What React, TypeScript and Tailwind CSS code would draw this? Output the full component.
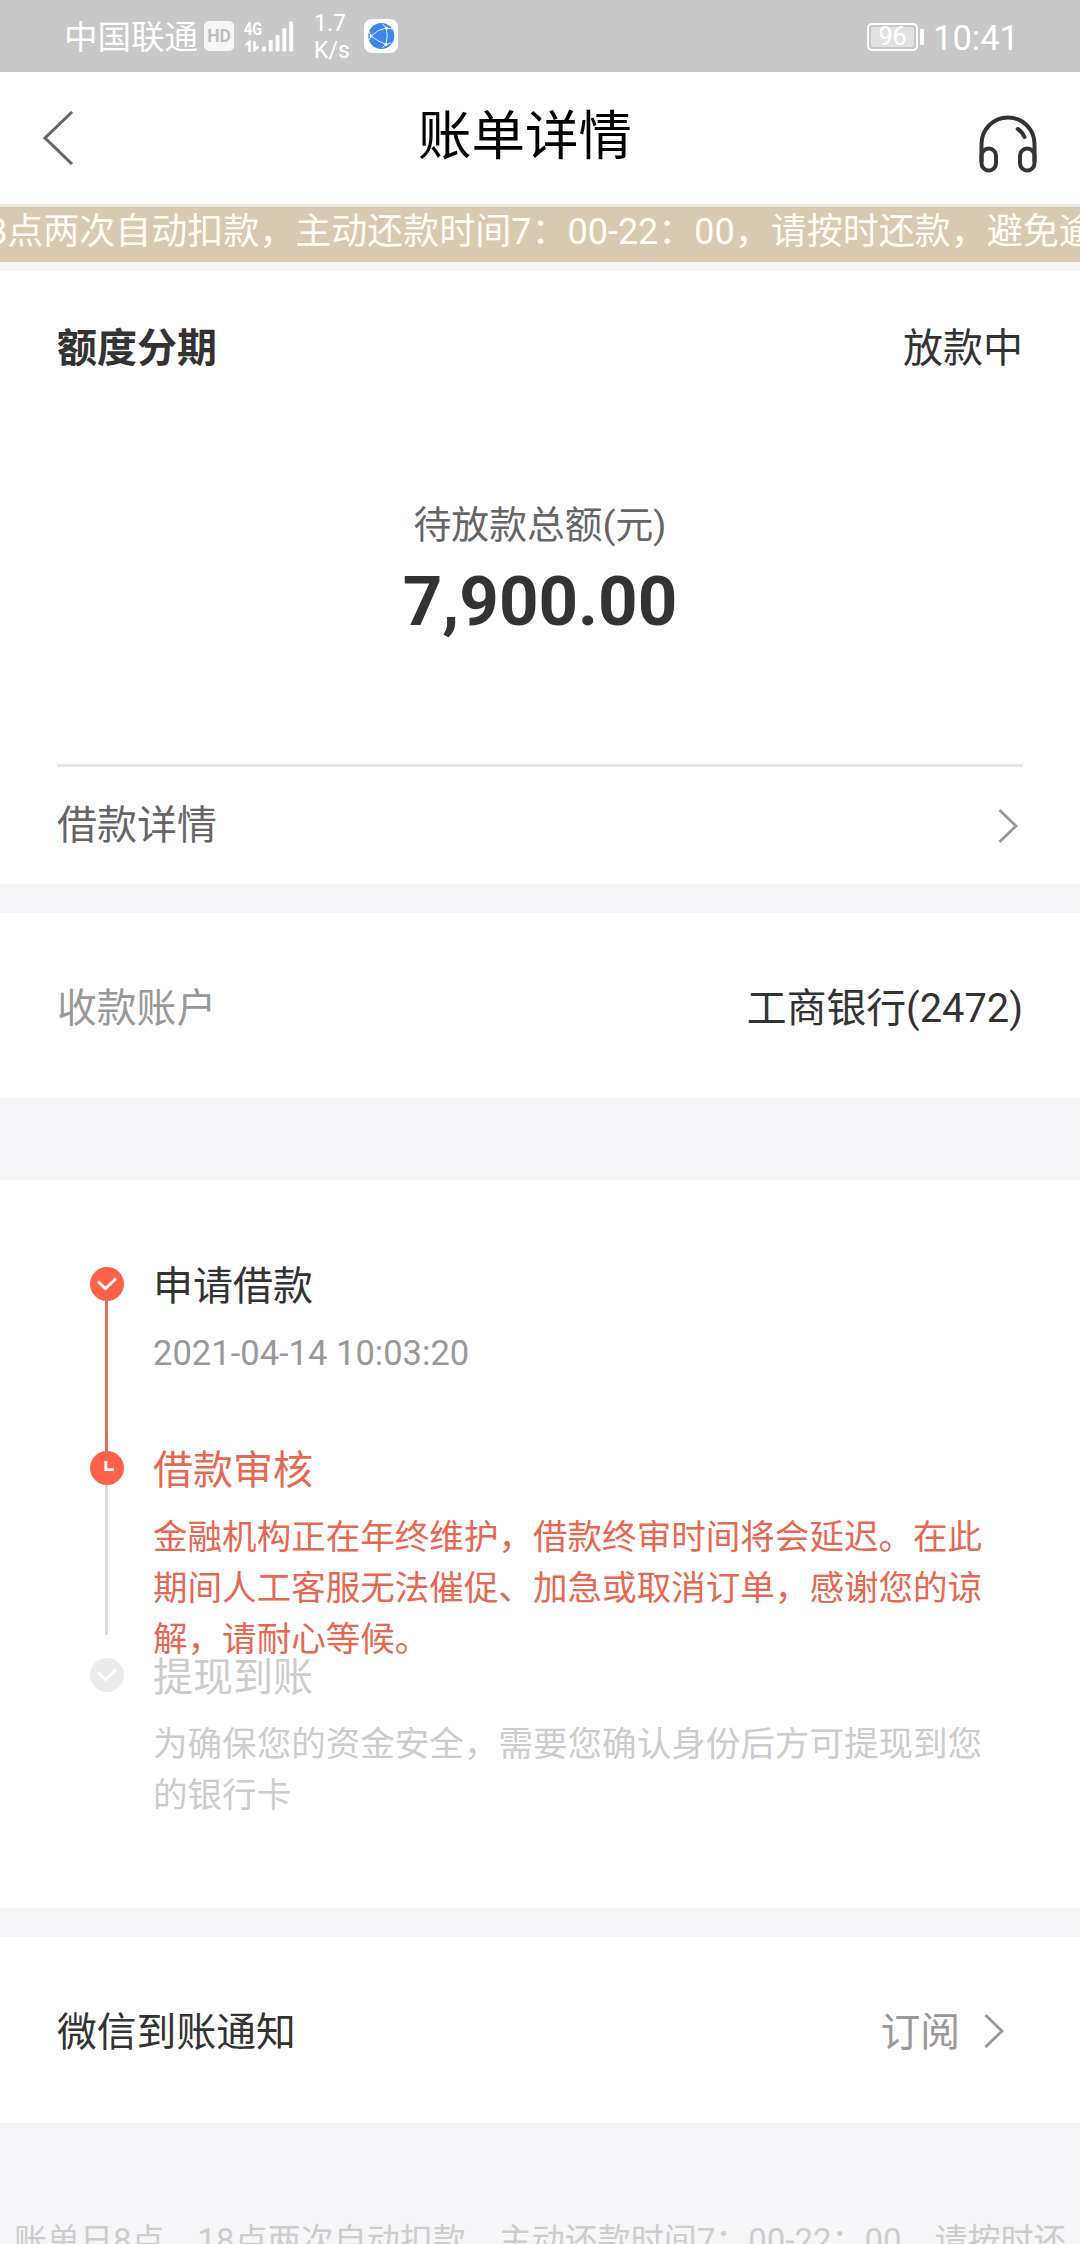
import type { ReactNode } from "react";

const NOTICE = "主动还款时间7：00-22：00，请按时还款，避免逾期";

function StatusBar() {
  return (
    <div className="flex h-[72px] shrink-0 items-center justify-between bg-[#c8c8c8] pr-[61px] pl-[64px] text-white">
      <div className="flex items-center">
        <span className="mt-[4px] text-[33.5px] leading-[40px]">中国联通</span>
        <span className="ml-[6px] flex h-[30px] w-[30px] items-center justify-center rounded-[5px] bg-[#f6f6f6] text-[17.5px] font-bold text-[#bdbdbd]">
          HD
        </span>
        <div className="ml-[10px] flex h-[32px] w-[51px] items-end">
          <div className="flex h-[32px] w-[18px] flex-col justify-between">
            <span className="origin-left scale-x-[0.8] text-[18px] leading-[17px] font-bold">
              4G
            </span>
            <svg className="ml-px h-[12px] w-[15px]" viewBox="0 0 15 12" fill="none" stroke="#fff" strokeWidth="2.5">
              <path d="M0.500 5L4.500 2V12M9.500 1V10L13.500 6.500" />
            </svg>
          </div>
          <svg className="h-[32px] w-[34px]" viewBox="0 0 34 32" fill="#fff">
            <rect x="0" y="26.700" width="4" height="5.300" rx="1" />
            <rect x="7" y="20" width="4" height="12" rx="1" />
            <rect x="14" y="15" width="4" height="17" rx="1" />
            <rect x="21" y="8" width="4" height="24" rx="1" />
            <rect x="28" y="1" width="4" height="31" rx="1" />
          </svg>
        </div>
        <div className="mt-[2px] ml-[19px] w-[34px] text-[23px] leading-[27px]">
          <p>1.7</p>
          <p>K/s</p>
        </div>
        <svg className="ml-[16px] h-[34px] w-[34px]" viewBox="0 0 34 34" fill="none">
          <rect width="34" height="34" rx="8" fill="#fff" />
          <circle cx="17.300" cy="17" r="13" fill="#3d86ea" />
          <path
            d="M7 17Q14 10 22.500 9M7 17Q13 22 22 25.500M22.500 9Q24 17 22 25.500M22.500 9L18 4.500M22.500 9L28 10M22 25.500L27 24M22 25.500L18 29M7 17L5 12M7 17L5 21"
            stroke="#e6f1ff"
          />
          <g fill="#fff">
            <circle cx="22.500" cy="9" r="1.500" />
            <circle cx="7" cy="17" r="1.500" />
            <circle cx="22" cy="25.500" r="1.500" />
          </g>
        </svg>
      </div>
      <div className="flex items-center">
        <div className="mt-px flex h-[28px] w-[51px] rounded-[5px] border-2 border-white p-[2px]">
          <span className="flex flex-1 items-center justify-center rounded-[2px] bg-[#e2e2e2] text-[25px] leading-none">
            96
          </span>
        </div>
        <span className="mt-px ml-[2px] h-[16px] w-[4px] rounded-[1px] bg-white" />
        <span className="mt-[3px] ml-[9px] text-[34.5px] leading-[40px]">10:41</span>
      </div>
    </div>
  );
}

function Header() {
  return (
    <header className="flex h-[135px] shrink-0 items-center justify-between border-b-[3px] border-[#e9e7e5] bg-white pr-[43px] pl-[42px]">
      <svg className="h-[54px] w-[32px]" viewBox="0 0 32 54" fill="none" stroke="#666" strokeWidth="3">
        <path d="M30 1L3 27L30 53" />
      </svg>
      <h1 className="-mt-[3px] -ml-[3px] text-[53.5px] leading-[80px] text-black">账单详情</h1>
      <svg
        className="mt-[12px] h-[58px] w-[58px]"
        viewBox="0 0 58 58"
        fill="none"
        stroke="#333"
        strokeWidth="4"
        strokeLinecap="round"
      >
        <path d="M2.500 46V29a26.500 26.500 0 0 1 53 0V46" />
        <rect x="2.500" y="33.500" width="14.500" height="22" rx="7.200" />
        <rect x="41" y="33.500" width="14.500" height="22" rx="7.200" />
        <path d="M38.700 14Q43 16.500 45.500 22" />
      </svg>
    </header>
  );
}

function Chevron({ className }: { className: string }) {
  return (
    <svg className={className} viewBox="0 0 20 34" fill="none" stroke="#999" strokeWidth="2.8">
      <path d="M1.500 1L18 17L1.500 33" />
    </svg>
  );
}

function CheckIcon({ color }: { color: string }) {
  return (
    <svg className="h-[34px] w-[34px] shrink-0" viewBox="0 0 34 34" fill="none">
      <circle cx="17" cy="17" r="17" fill={color} />
      <path d="M8 14.500L15.500 21.500L26 11.500" stroke="#fff" strokeWidth="2.800" />
    </svg>
  );
}

function ClockIcon() {
  return (
    <svg className="h-[34px] w-[34px] shrink-0" viewBox="0 0 34 34" fill="none">
      <circle cx="17" cy="17" r="17" fill="#ff624b" />
      <path d="M15.800 10V18.700H24" stroke="#fff" strokeWidth="2.800" />
    </svg>
  );
}

function Step({
  icon,
  line,
  title,
  children,
  className,
}: {
  icon: ReactNode;
  line?: string;
  title: string;
  children: ReactNode;
  className: string;
}) {
  return (
    <div className={`flex ${className}`}>
      <div className="flex w-[34px] flex-col">
        {icon}
        {line && <span className={`ml-[15px] w-[3px] shrink-0 ${line}`} />}
      </div>
      <div className="ml-[29px] w-[832px]">
        <p className="-mt-[2px] text-[40px] leading-[44px]">{title}</p>
        <div className="mt-[19px] text-[34.56px] leading-[51px]">{children}</div>
      </div>
    </div>
  );
}

export default function App() {
  return (
    <div className="flex h-[2244px] w-[1080px] flex-col overflow-hidden bg-[#f6f6f8] font-[Roboto,'Noto_Sans_CJK_SC',sans-serif] text-[40px] text-[#333]">
      <StatusBar />
      <Header />

      <div className="flex h-[55px] shrink-0 items-center overflow-hidden bg-[#d8c9b0] pb-[5px] text-[36px] whitespace-nowrap text-[#fffdf5]">
        <span className="-ml-[13px] leading-[50px]">8点两次自动扣款，{NOTICE}</span>
      </div>

      <section className="mt-[9px] h-[613px] shrink-0 bg-white px-[57px]">
        <div className="flex items-center justify-between pt-[48px] leading-[60px]">
          <h2 className="font-bold">额度分期</h2>
          <span>放款中</span>
        </div>
        <div className="mt-[118px] text-center">
          <p className="text-[37.8px] leading-[56px] text-[#666]">待放款总额(元)</p>
          <p className="mt-[9px] text-[69px] leading-[80px] font-bold">7,900.00</p>
        </div>
        <div className="mt-[122px] flex h-[120px] items-center justify-between border-t-[3px] border-[#e5e5e5] pr-[5px] text-[#666]">
          <span>借款详情</span>
          <Chevron className="h-[34px] w-[20px]" />
        </div>
      </section>

      <section className="mt-[29px] flex h-[185px] shrink-0 items-center justify-between bg-white px-[57px] pt-[6px] text-[39.8px]">
        <span className="text-[#999]">收款账户</span>
        <span>工商银行(2472)</span>
      </section>

      <section className="mt-[82px] h-[728px] shrink-0 bg-white pt-[87px] pl-[90px]">
        <Step
          className="h-[184px]"
          icon={<CheckIcon color="#ff624b" />}
          line="h-[150px] bg-[#e0705f]"
          title="申请借款"
        >
          <span className="text-[#999]">2021-04-14 10:03:20</span>
        </Step>
        <Step
          className="h-[207px] text-[#e96753]"
          icon={<ClockIcon />}
          line="h-[150px] bg-[#ddd]"
          title="借款审核"
        >
          金融机构正在年终维护，借款终审时间将会延迟。在此期间人工客服无法催促、加急或取消订单，感谢您的谅解，请耐心等候。
        </Step>
        <Step
          className="text-[#ccc]"
          icon={<CheckIcon color="#ebebeb" />}
          title="提现到账"
        >
          为确保您的资金安全，需要您确认身份后方可提现到您的银行卡
        </Step>
      </section>

      <section className="mt-[29px] flex h-[186px] shrink-0 items-center justify-between bg-white pt-[5px] pr-[76px] pl-[57px] text-[39.8px]">
        <span>微信到账通知</span>
        <div className="flex items-center text-[#999]">
          <span>订阅</span>
          <Chevron className="-mt-[3px] ml-[24px] h-[34px] w-[20px]" />
        </div>
      </section>

      <p className="mt-[93px] shrink-0 pl-[14px] text-[33px] leading-[50px] whitespace-nowrap text-[#ccc]">
        账单日8点、18点两次自动扣款，主动还款时间7：00-22：00，请按时还
      </p>
    </div>
  );
}
